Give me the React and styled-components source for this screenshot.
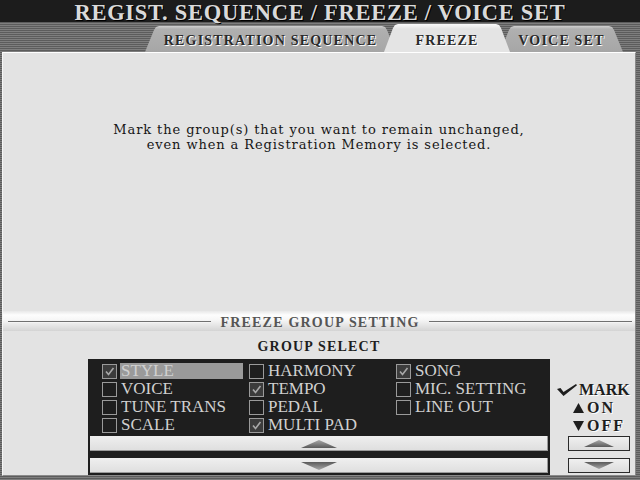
import React from "react";
import styled, { createGlobalStyle } from "styled-components";

const Global = createGlobalStyle`
  html, body { margin: 0; padding: 0; background: #6a6a6a; }
  #root { width: 640px; height: 480px; }
`;

const Screen = styled.div`
  width: 640px;
  height: 480px;
  overflow: hidden;
  display: flex;
  flex-direction: column;
  background: repeating-linear-gradient(to bottom, #5c5c5c 0 1px, #7e7e7e 1px 2px);
  font-family: "Liberation Serif", serif;
`;

const Header = styled.div`
  height: 22px;
  background: #1c1c1c;
  display: flex;
  justify-content: center;
  align-items: flex-start;
  position: relative;
  z-index: 1;
`;

const Title = styled.h1`
  margin: 0;
  font-size: 22.5px;
  line-height: 25px;
  height: 22px;
  font-weight: bold;
  color: #dadada;
  letter-spacing: 0.72px;
  text-shadow: 1px 1px 0 #000;
  white-space: nowrap;
`;

const TabStrip = styled.div`
  height: 30px;
  display: flex;
  align-items: flex-end;
  padding-left: 145px;
`;

const Tab = styled.div`
  position: relative;
  height: ${(p) => (p.$active ? 28 : 26)}px;
  width: ${(p) => p.$w}px;
  margin-left: ${(p) => p.$ml || 0}px;
  z-index: ${(p) => (p.$active ? 2 : 1)};
  box-sizing: border-box;
  padding-top: ${(p) => (p.$active ? 5 : 3)}px;
  background: ${(p) =>
    p.$active
      ? "linear-gradient(#fafafa, #e4e4e4 5px)"
      : "linear-gradient(#d0d0d0, #b0b0b0 3px, #a6a6a6)"};
  clip-path: polygon(
    0 100%,
    9px 4px,
    11px 1px,
    14px 0,
    calc(100% - 14px) 0,
    calc(100% - 11px) 1px,
    calc(100% - 9px) 4px,
    100% 100%
  );
  display: flex;
  align-items: center;
  justify-content: center;
  font-size: 14px;
  font-weight: bold;
  letter-spacing: 1.2px;
  color: #2a2a2a;
  text-shadow: 1px 1px 0 #fff;
  white-space: nowrap;
`;

const Panel = styled.div`
  flex: 1;
  margin: 0 4px 4px 2px;
  background: #e3e3e3;
  border-top: 1px solid #fff;
  border-left: 1px solid #f6f6f6;
  border-right: 1px solid #8a8a8a;
  border-bottom: 1px solid #8a8a8a;
  display: flex;
  flex-direction: column;
  position: relative;
  z-index: 3;
`;

const Message = styled.p`
  height: 258px;
  margin: 0;
  box-sizing: border-box;
  padding-top: 69px;
  text-align: center;
  font-family: "DejaVu Serif", serif;
  font-size: 13px;
  line-height: 15.2px;
  letter-spacing: 0.9px;
  color: #161616;
`;

const Band = styled.div`
  height: 20px;
  display: flex;
  align-items: center;
  gap: 9px;
  padding: 0 3px 0 5px;
  background: linear-gradient(#e8e8e8, #fdfdfd 20%, #f6f6f6 45%, #d4d4d4);
`;

const BandLine = styled.div`
  flex: 1;
  height: 1px;
  background: #707070;
  box-shadow: 0 1px 0 #f4f4f4;
`;

const BandTitle = styled.span`
  font-size: 14px;
  font-weight: bold;
  color: #555;
  letter-spacing: 1.2px;
  line-height: 16px;
  padding-top: 3px;
`;

const Bottom = styled.div`
  flex: 1;
  display: flex;
  padding-left: 85px;
`;

const GroupCol = styled.div`
  width: 462px;
  display: flex;
  flex-direction: column;
  align-items: center;
  padding-top: 8px;
`;

const GroupTitle = styled.div`
  font-size: 14px;
  font-weight: bold;
  letter-spacing: 1.2px;
  color: #1e1e1e;
  line-height: 16px;
  margin-bottom: 4px;
`;

const ListBox = styled.div`
  align-self: stretch;
  flex: 1;
  background: #1e1e1e;
  padding: 3px 2px 2px;
  display: flex;
  flex-direction: column;
`;

const Grid = styled.div`
  display: grid;
  grid-template-columns: repeat(3, 147px);
  grid-template-rows: repeat(4, 18px);
  grid-auto-flow: column;
  padding-left: 12px;
  margin-bottom: 2px;
`;

const Item = styled.div`
  display: flex;
  align-items: center;
  gap: 3px;
`;

const Box = styled.span`
  width: 15px;
  height: 15px;
  box-sizing: border-box;
  border: 1px solid #9a9a9a;
  background: ${(p) => (p.$on ? "#3c3c3c" : "transparent")};
  display: flex;
  align-items: center;
  justify-content: center;
  flex: none;
`;

const Label = styled.span`
  font-size: 17px;
  line-height: 16px;
  color: #d0d0d0;
  padding: 0 1px;
  width: ${(p) => (p.$sel ? "121px" : "auto")};
  background: ${(p) => (p.$sel ? "#9a9a9a" : "transparent")};
  white-space: nowrap;
`;

const ScrollBar = styled.div`
  height: 15px;
  margin-top: ${(p) => p.$mt || 0}px;
  background: linear-gradient(#efefef, #dedede);
  box-shadow: inset 0 -1px 0 #9a9a9a, inset -1px 0 0 #9a9a9a;
  display: flex;
  align-items: center;
  justify-content: center;
`;

const SideCol = styled.div`
  width: 76px;
  margin-left: 6px;
  display: flex;
  flex-direction: column;
  justify-content: flex-end;
  padding-bottom: 2px;
`;

const Legend = styled.div`
  display: flex;
  align-items: center;
  gap: ${(p) => (p.$first ? 2 : 3)}px;
  padding-left: ${(p) => (p.$first ? 1 : 17)}px;
  height: 18px;
  font-size: 16px;
  font-weight: bold;
  letter-spacing: ${(p) => (p.$first ? 0 : 2)}px;
  color: #1e1e1e;
  text-shadow: 1px 1px 0 #fff;
`;

const SideButton = styled.div`
  margin-left: 12px;
  margin-top: ${(p) => p.$mt || 0}px;
  width: 62px;
  height: 15px;
  box-sizing: border-box;
  border: 1px solid #2a2a2a;
  background: linear-gradient(#f0f0f0, #dcdcdc);
  display: flex;
  align-items: center;
  justify-content: center;
`;

const Arrow = ({ down, w = 36, h = 8 }) => (
  <svg width={w} height={h} viewBox={`0 0 ${w} ${h}`}>
    <defs>
      <linearGradient id={down ? "gd" : "gu"} x1="0" y1="0" x2="0" y2="1">
        <stop offset="0" stopColor={down ? "#5a5a5a" : "#a8a8a8"} />
        <stop offset="1" stopColor={down ? "#a8a8a8" : "#5a5a5a"} />
      </linearGradient>
    </defs>
    <polygon
      points={down ? `0,0 ${w},0 ${w / 2},${h}` : `0,${h} ${w},${h} ${w / 2},0`}
      fill={`url(#${down ? "gd" : "gu"})`}
    />
  </svg>
);

const Tick = () => (
  <svg width="11" height="11" viewBox="0 0 11 11">
    <polyline points="2,5.5 4.5,8.5 9.5,2" fill="none" stroke="#a8a8a8" strokeWidth="1.6" />
  </svg>
);

const MarkIcon = () => (
  <svg width="20" height="12" viewBox="0 0 20 12">
    <polygon points="0,5 3.5,4 6.5,8 19,0 20,1.2 6.5,12" fill="#1e1e1e" />
  </svg>
);

const SmallTri = ({ down }) => (
  <svg width="11" height="10" viewBox="0 0 11 10">
    <polygon points={down ? "0,0 11,0 5.5,10" : "0,10 11,10 5.5,0"} fill="#1e1e1e" />
  </svg>
);

const groups = [
  { name: "STYLE", on: true, sel: true },
  { name: "VOICE" },
  { name: "TUNE TRANS" },
  { name: "SCALE" },
  { name: "HARMONY" },
  { name: "TEMPO", on: true },
  { name: "PEDAL" },
  { name: "MULTI PAD", on: true },
  { name: "SONG", on: true },
  { name: "MIC. SETTING" },
  { name: "LINE OUT" },
];

export default function App() {
  return (
    <>
      <Global />
      <Screen>
        <Header>
          <Title>REGIST. SEQUENCE / FREEZE / VOICE SET</Title>
        </Header>
        <TabStrip>
          <Tab $w={251}>REGISTRATION SEQUENCE</Tab>
          <Tab $w={126} $ml={-12} $active>
            FREEZE
          </Tab>
          <Tab $w={123} $ml={-10}>
            VOICE SET
          </Tab>
        </TabStrip>
        <Panel>
          <Message>
            Mark the group(s) that you want to remain unchanged,
            <br />
            even when a Registration Memory is selected.
          </Message>
          <Band>
            <BandLine />
            <BandTitle>FREEZE GROUP SETTING</BandTitle>
            <BandLine />
          </Band>
          <Bottom>
            <GroupCol>
              <GroupTitle>GROUP SELECT</GroupTitle>
              <ListBox>
                <Grid>
                  {groups.map((g) => (
                    <Item key={g.name}>
                      <Box $on={g.on}>{g.on && <Tick />}</Box>
                      <Label $sel={g.sel}>{g.name}</Label>
                    </Item>
                  ))}
                </Grid>
                <ScrollBar>
                  <Arrow />
                </ScrollBar>
                <ScrollBar $mt={7}>
                  <Arrow down />
                </ScrollBar>
              </ListBox>
            </GroupCol>
            <SideCol>
              <Legend $first>
                <MarkIcon />
                MARK
              </Legend>
              <Legend>
                <SmallTri />
                ON
              </Legend>
              <Legend>
                <SmallTri down />
                OFF
              </Legend>
              <SideButton $mt={1}>
                <Arrow w={30} h={7} />
              </SideButton>
              <SideButton $mt={7}>
                <Arrow down w={30} h={7} />
              </SideButton>
            </SideCol>
          </Bottom>
        </Panel>
      </Screen>
    </>
  );
}
